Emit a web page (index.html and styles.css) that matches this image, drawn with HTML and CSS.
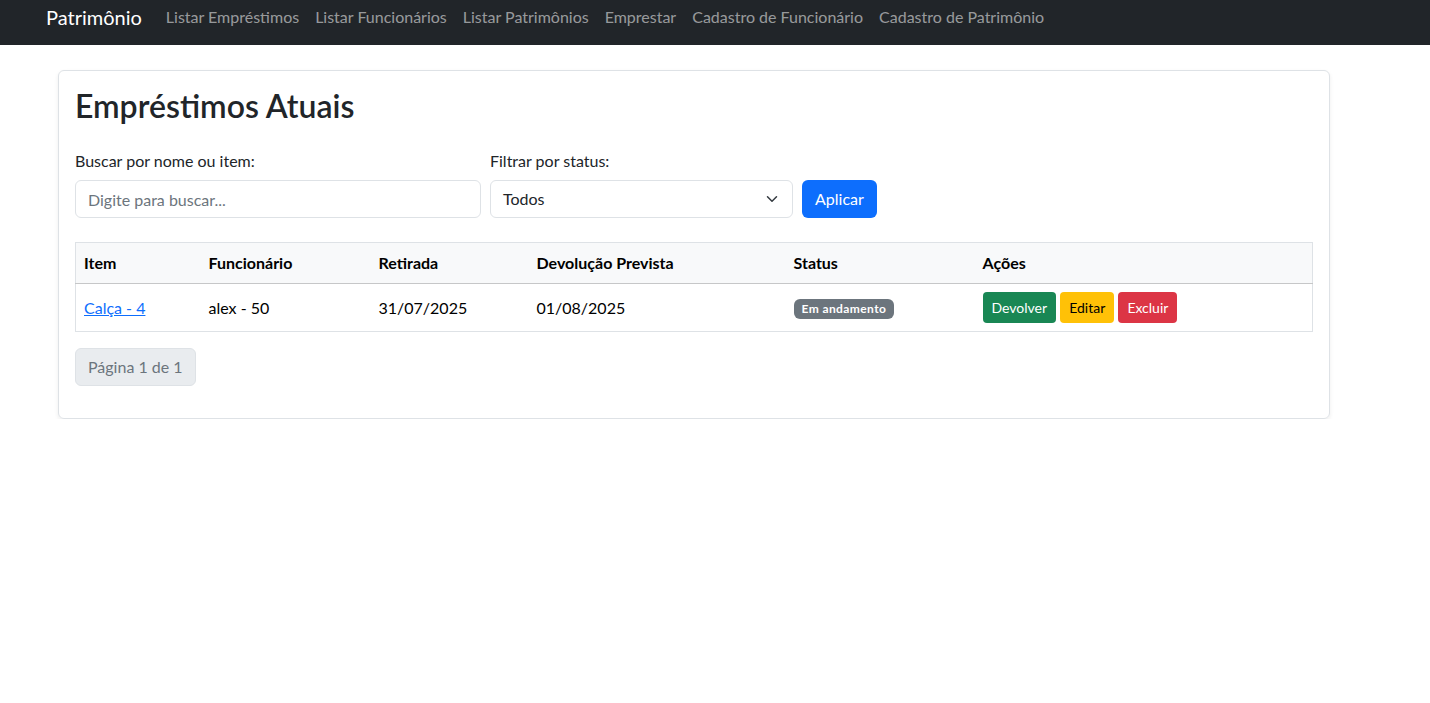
FILE: index.html
```html
<!DOCTYPE html>
<html lang="pt-BR">
<head>
<meta charset="utf-8">
<title>Empréstimos Atuais</title>
<link rel="stylesheet" href="styles.css">
</head>
<body>
<nav class="navbar">
  <a class="brand" href="#">Patrimônio</a>
  <ul class="nav">
    <li><a href="#">Listar Empréstimos</a></li>
    <li><a href="#">Listar Funcionários</a></li>
    <li><a href="#">Listar Patrimônios</a></li>
    <li><a href="#">Emprestar</a></li>
    <li><a href="#">Cadastro de Funcionário</a></li>
    <li><a href="#">Cadastro de Patrimônio</a></li>
  </ul>
</nav>
<main class="main">
  <section class="card">
    <h2 class="title">Empréstimos Atuais</h2>
    <form class="filters">
      <div class="field field-search">
        <label class="label">Buscar por nome ou item:</label>
        <input class="input" type="text" placeholder="Digite para buscar...">
      </div>
      <div class="field field-status">
        <label class="label">Filtrar por status:</label>
        <div class="select">
          <span>Todos</span>
          <svg width="16" height="12" viewBox="0 0 16 16"><path d="m2 5 6 6 6-6" fill="none" stroke="#343a40" stroke-width="2" stroke-linecap="round" stroke-linejoin="round"/></svg>
        </div>
      </div>
      <button type="button" class="btn btn-primary">Aplicar</button>
    </form>
    <table class="table">
      <thead>
        <tr>
          <th class="c1">Item</th>
          <th class="c2">Funcionário</th>
          <th class="c3">Retirada</th>
          <th class="c4">Devolução Prevista</th>
          <th class="c5">Status</th>
          <th class="c6">Ações</th>
        </tr>
      </thead>
      <tbody>
        <tr>
          <td><a class="link" href="#">Calça - 4</a></td>
          <td>alex - 50</td>
          <td>31/07/2025</td>
          <td>01/08/2025</td>
          <td><span class="badge">Em andamento</span></td>
          <td class="actions">
            <button class="btn-sm btn-success">Devolver</button>
            <button class="btn-sm btn-warning">Editar</button>
            <button class="btn-sm btn-danger">Excluir</button>
          </td>
        </tr>
      </tbody>
    </table>
    <div class="pagination">
      <span class="page">Página 1 de 1</span>
    </div>
  </section>
</main>
</body>
</html>
```

FILE: styles.css
```css
* { box-sizing: border-box; }
body {
  margin: 0;
  font-family: "Segoe UI", Lato, "Noto Sans", sans-serif;
  font-size: 16px;
  line-height: 1.5;
  color: #212529;
  background: #fff;
}
.navbar {
  background: #212529;
  height: 45px;
  display: flex;
  align-items: flex-start;
  padding: 2px 0 0 46px;
}
.brand {
  color: #fff;
  text-decoration: none;
  font-size: 20px;
  line-height: 30px;
  margin-right: 16px;
}
.nav {
  list-style: none;
  margin: 0;
  padding: 0;
  display: flex;
}
.nav a {
  display: block;
  color: rgba(255,255,255,.55);
  text-decoration: none;
  padding: 3px 8px;
  line-height: 24px;
}
.main {
  padding: 25px 0 0 58px;
}
.card {
  width: 1272px;
  border: 1px solid #dee2e6;
  border-radius: 6px;
  box-shadow: 0 2px 4px rgba(0,0,0,.075);
  padding: 16px;
}
.title {
  margin: 0 0 24px;
  font-size: 32px;
  font-weight: 600;
  line-height: 1.2;
}
.filters {
  display: flex;
  align-items: flex-end;
  gap: 9px;
  margin-bottom: 24px;
}
.field { display: flex; flex-direction: column; }
.field-search { width: 406px; }
.field-status { width: 303px; }
.label {
  margin-bottom: 7px;
  line-height: 24px;
}
.input, .select {
  height: 38px;
  border: 1px solid #dee2e6;
  border-radius: 6px;
  padding: 6px 12px;
  font: inherit;
  color: #212529;
}
.input::placeholder { color: #6c757d; }
.select {
  display: flex;
  align-items: center;
  justify-content: space-between;
  padding-right: 12px;
}
.btn {
  height: 38px;
  border: 1px solid transparent;
  border-radius: 6px;
  padding: 6px 12px;
  font: inherit;
  cursor: pointer;
}
.btn-primary { background: #0d6efd; color: #fff; }
.table {
  width: 1238px;
  border-collapse: collapse;
  border: 1px solid #dee2e6;
  margin-bottom: 16px;
  table-layout: fixed;
}
.table th, .table td {
  text-align: left;
  padding: 8px;
  vertical-align: middle;
}
.table th {
  background: #f8f9fa;
  font-weight: 700;
  color: #000;
  height: 41px;
  border-bottom: 1px solid #c6c7c8;
}
.table td { height: 47px; color: #000; }
.c1 { width: 125px; }
.c2 { width: 170px; }
.c3 { width: 158px; }
.c4 { width: 257px; }
.c5 { width: 189px; }
.link { color: #0d6efd; }
.badge {
  display: inline-block;
  background: #6c757d;
  color: #fff;
  font-size: 12px;
  font-weight: 700;
  line-height: 1;
  letter-spacing: .4px;
  padding: 4px 8px;
  border-radius: 6px;
  vertical-align: 1px;
}
.actions { white-space: nowrap; }
.btn-sm {
  height: 31px;
  border: 1px solid transparent;
  border-radius: 4px;
  padding: 4px 8px;
  font: inherit;
  font-size: 14px;
  line-height: 21px;
  cursor: pointer;
}
.btn-success { background: #198754; color: #fff; }
.btn-warning { background: #ffc107; color: #000; }
.btn-danger { background: #dc3545; color: #fff; }
.pagination { display: flex; margin-bottom: 16px; }
.page {
  display: block;
  background: #e9ecef;
  border: 1px solid #dee2e6;
  border-radius: 6px;
  color: #6c757d;
  padding: 6px 12px;
  line-height: 24px;
}
```
